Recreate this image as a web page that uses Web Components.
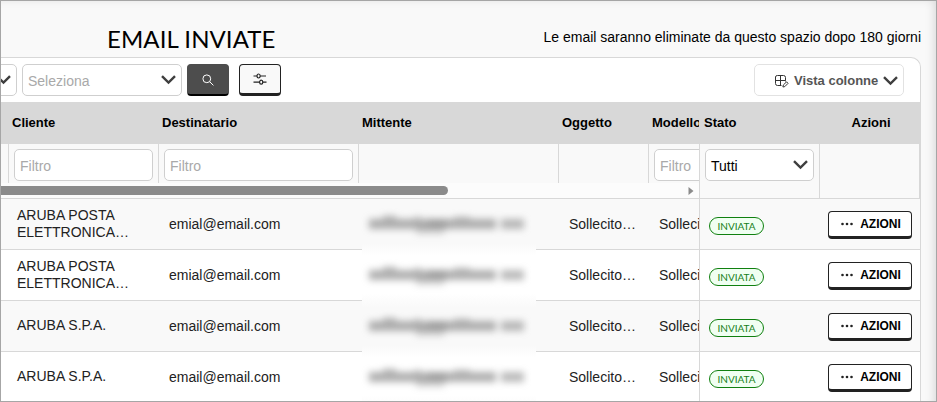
<!DOCTYPE html>
<html lang="it">
<head>
<meta charset="utf-8">
<title>Email inviate</title>
<style>
  html, body {
    margin: 0;
    height: 100%;
    overflow: hidden;
  }

  body {
    --line: #d8d8d8;
    --field-line: #cfcfcf;
    --stripe: #f9f9f9;
    --ink: #222;
    font-family: "Liberation Sans", Arial, sans-serif;
    font-size: 14px;
    color: #000;
  }
</style>
</head>
<body>
<mail-page></mail-page>

<script>
// Shared base: attaches an open root and fills it from template()
class MailElement extends HTMLElement {
  constructor() {
    super();
    this.attachShadow({ mode: 'open' });
  }

  connectedCallback() {
    this.shadowRoot.innerHTML = this.template();
  }
}

const CHEVRON = `
  <svg width="15" height="10" viewBox="0 0 15 10" fill="none" stroke="#3f3f3f" stroke-width="2.4">
    <path d="M1 1.2 7.5 7.6 14 1.2"/>
  </svg>`;

class MailSelect extends MailElement {
  template() {
    return `
      <style>
        :host {
          display: flex;
          align-items: center;
          box-sizing: border-box;
          height: 32px;
          padding: 2px 5px 0 5px;
          background: #fff;
          border: 1px solid var(--field-line);
          border-radius: 5px;
        }
        :host([placeholder]) { color: #a9a9a9; }
        svg { flex: none; margin: -2px 0 0 auto; }
      </style>
      <slot></slot>${CHEVRON}
    `;
  }
}

class MailFilter extends MailElement {
  template() {
    return `
      <style>
        :host {
          display: flex;
          align-items: center;
          box-sizing: border-box;
          height: 32px;
          padding: 2px 5px 0;
          color: #a9a9a9;
          background: #fff;
          border: 1px solid var(--field-line);
          border-radius: 5px;
        }
      </style>
      <slot></slot>
    `;
  }
}

class MailButton extends MailElement {
  template() {
    return `
      <style>
        :host {
          display: flex;
          align-items: center;
          justify-content: center;
          box-sizing: border-box;
          width: 42px;
          height: 32px;
          border: 1px solid var(--ink);
          border-bottom-width: 3px;
          border-radius: 4px;
          background: #f9f9f9;
        }
        :host([variant="dark"]) {
          background: #4d4d4d;
          border-color: #4d4d4d;
          border-bottom: 2px solid #000;
        }
        :host([variant="action"]) {
          width: 84px;
          height: 28px;
          gap: 7px;
          padding-left: 2px;
          background: #fff;
          font-size: 12px;
          font-weight: bold;
          color: #000;
        }
      </style>
      <slot></slot>
    `;
  }
}

class MailBadge extends MailElement {
  template() {
    return `
      <style>
        :host {
          display: flex;
          align-items: center;
          justify-content: center;
          box-sizing: border-box;
          width: 55px;
          height: 18px;
          border: 1px solid #108010;
          border-radius: 9px;
          background: #f0fff2;
          color: #16801a;
          font: 10px Lato, sans-serif;
        }
      </style>
      <slot></slot>
    `;
  }
}

class MailToolbar extends MailElement {
  template() {
    return `
      <style>
        :host {
          display: flex;
          align-items: center;
          box-sizing: border-box;
          height: 44px;
          padding: 0 16px 0 0;
          overflow: hidden;
        }
        .prev { flex: none; width: 160px; margin-left: -144px; }
        .pick { width: 160px; margin-left: 5px; }
        .search { margin-left: 5px; }
        .tune { margin-left: 10px; }
        .view {
          display: flex;
          align-items: center;
          box-sizing: border-box;
          width: 150px;
          height: 32px;
          margin-left: auto;
          padding: 0 5px 0 20px;
          border: 1px solid #e2e2e2;
          border-radius: 5px;
          color: #555;
          font-size: 13px;
          font-weight: bold;
        }
        .view span { margin-left: 5px; flex: 1; white-space: nowrap; }
        .view svg { position: relative; top: .5px; }
      </style>
      <mail-select class="prev"></mail-select>
      <mail-select class="pick" placeholder>Seleziona</mail-select>
      <mail-button class="search" variant="dark">
        <svg width="12" height="12" viewBox="0 0 12 12" fill="none" stroke="#fff" stroke-width="1">
          <circle cx="4.8" cy="4.8" r="3.9"/>
          <path d="M7.7 7.7 11.4 11.4"/>
        </svg>
      </mail-button>
      <mail-button class="tune">
        <svg width="14" height="12" viewBox="0 0 14 12" fill="none" stroke="#222" stroke-width="1.2">
          <path d="M.5 3H4M7.2 3H13M.5 9.2H6.6M9.8 9.2H13.5"/>
          <ellipse cx="5.6" cy="3" rx="1.6" ry="2"/>
          <ellipse cx="8.2" cy="9.2" rx="1.6" ry="2"/>
        </svg>
      </mail-button>
      <div class="view">
        <svg width="14" height="14" viewBox="0 0 14 14" fill="none" stroke="#333" stroke-width="1">
          <path d="M6.5 11.5H2.5Q.5 11.5.5 9.5V3Q.5 1.5 2.5 1.5H8.5Q10.5 1.5 10.5 3.5V6.5H.5M5.5 1.5V11.5M10.5 6.5V7.5"/>
          <path d="M8.3 11 11.3 8.1Q12.4 7.8 13 9.4L9.8 12.6 7.9 13Z"/>
        </svg>
        <span>Vista colonne</span>
        ${CHEVRON}
      </div>
    `;
  }
}

// One grid line: a clipped scrolling half and a pinned half on the right
class MailRow extends MailElement {
  template() {
    return `
      <style>
        :host {
          display: flex;
          box-sizing: border-box;
          height: 51px;
          background: var(--row, #fff);
          border-bottom: 1px solid var(--line);
          color: var(--ink);
        }
        .scroll { display: flex; flex: 1; min-width: 0; overflow-x: clip; }
        .pinned {
          display: flex;
          flex: none;
          width: 221px;
          box-sizing: border-box;
          border-left: 1px solid var(--line);
        }
        .cell {
          display: flex;
          flex: none;
          align-items: center;
          box-sizing: border-box;
          width: 200px;
          padding-left: 10px;
          white-space: nowrap;
        }
        .edge { width: 8px; padding: 0; }
        .client { width: 150px; padding-left: 8px; line-height: 17px; white-space: pre; }
        .client.single { padding-bottom: 2px; }
        .subject { width: 90px; }
        .model { width: 150px; }
        .state { width: 120px; padding: 4px 0 0 9px; }
        .actions { width: 100px; padding: 1px 0 0 8px; }
        .sender { position: relative; padding-left: 3px; }
        /* blurred cell: softens the line below it as well */
        .sender::after {
          content: "";
          position: absolute;
          left: 3px;
          bottom: -7px;
          width: 174px;
          height: 13px;
          background: linear-gradient(var(--row, #fff), var(--next, #fff));
        }
      </style>
      <div class="scroll">
        <div class="cell edge"></div>
        <div class="cell client ${this.hasAttribute('single') ? 'single' : ''}"><slot name="client"></slot></div>
        <div class="cell"><slot name="recipient"></slot></div>
        <div class="cell sender">
          <svg width="174" height="36" viewBox="0 0 174 36" style="filter: blur(3.6px)" fill="#777">
            <path opacity=".58" d="M7 13H21V10H34V13H53V11H58V13H92V11H108V13H134V23H7Z"/>
            <path opacity=".3" d="M54 20H82V28H54ZM66 13H84V24H66Z"/>
            <path opacity=".5" d="M139 13H162V23H139Z"/>
          </svg>
        </div>
        <div class="cell subject">Sollecito…</div>
        <div class="cell model">Sollecito</div>
      </div>
      <div class="pinned">
        <div class="cell state"><mail-badge>INVIATA</mail-badge></div>
        <div class="cell actions">
          <mail-button variant="action">
            <svg width="12" height="4" viewBox="0 0 12 4" fill="#222">
              <circle cx="1.5" cy="2" r="1.3"/><circle cx="6" cy="2" r="1.3"/><circle cx="10.5" cy="2" r="1.3"/>
            </svg>
            <span>AZIONI</span>
          </mail-button>
        </div>
      </div>
    `;
  }
}

class MailGrid extends MailElement {
  template() {
    return `
      <style>
        :host { display: block; }
        .line { display: flex; }
        .scroll { flex: 1; min-width: 0; overflow: hidden; }
        .cells { display: flex; }
        .cell { flex: none; box-sizing: border-box; width: 200px; }
        .w150 { width: 150px; }
        .w90 { width: 90px; }
        .w120 { width: 120px; }
        .w100 { width: 100px; }
        .pinned { display: flex; flex: none; box-sizing: border-box; width: 221px; border-left: 1px solid var(--line); }

        .head {
          height: 42px;
          background: var(--line);
          font-size: 13px;
          font-weight: bold;
          line-height: 41px;
        }
        .head .cell { padding-left: 3px; }
        .head .pinned .cell { padding-left: 4px; }
        .head .pinned .w100 { padding: 0 0 0 2px; text-align: center; }

        .filters { height: 55px; box-sizing: border-box; border-bottom: 1px solid var(--line); background: var(--stripe); }
        .filters .cells { height: 39px; }
        .filters .cell { padding: 5px 5px 0; border-right: 1px solid var(--line); }
        .line .cell.edge { width: 8px; padding: 0; }
        .track {
          display: flex;
          align-items: center;
          justify-content: space-between;
          height: 15px;
          padding-right: 5px;
          background: #fcfcfc;
        }
        .thumb { width: 447px; height: 9px; background: #8b8b8b; border-radius: 0 5px 5px 0; }
      </style>
      <div class="line head">
        <div class="scroll">
          <div class="cells">
            <div class="cell edge"></div>
            <div class="cell w150">Cliente</div>
            <div class="cell">Destinatario</div>
            <div class="cell">Mittente</div>
            <div class="cell w90">Oggetto</div>
            <div class="cell w150">Modello</div>
          </div>
        </div>
        <div class="pinned">
          <div class="cell w120">Stato</div>
          <div class="cell w100">Azioni</div>
        </div>
      </div>
      <div class="line filters">
        <div class="scroll">
          <div class="cells">
            <div class="cell edge"></div>
            <div class="cell w150"><mail-filter>Filtro</mail-filter></div>
            <div class="cell"><mail-filter>Filtro</mail-filter></div>
            <div class="cell"></div>
            <div class="cell w90"></div>
            <div class="cell w150"><mail-filter>Filtro</mail-filter></div>
          </div>
          <div class="track">
            <div class="thumb"></div>
            <svg width="6" height="8" viewBox="0 0 6 8"><path d="M.5 0 5.5 4 .5 8Z" fill="#8b8b8b"/></svg>
          </div>
        </div>
        <div class="pinned">
          <div class="cell w120"><mail-select>Tutti</mail-select></div>
          <div class="cell w100"></div>
        </div>
      </div>
      <slot></slot>
    `;
  }
}

class MailPage extends MailElement {
  rows() {
    const mails = [
      { client: 'ARUBA POSTA\nELETTRONICA…', to: 'emial@email.com' },
      { client: 'ARUBA POSTA\nELETTRONICA…', to: 'emial@email.com' },
      { client: 'ARUBA S.P.A.', to: 'email@email.com' },
      { client: 'ARUBA S.P.A.', to: 'email@email.com' }
    ];
    return mails.map((mail, i) => `
      <mail-row ${mail.client.includes('\n') ? '' : 'single'} style="${i % 2 ? '--next: #f9f9f9' : '--row: #f9f9f9'}">
        <span slot="client">${mail.client}</span>
        <span slot="recipient">${mail.to}</span>
      </mail-row>
    `).join('');
  }

  template() {
    return `
      <style>
        :host {
          display: block;
          box-sizing: border-box;
          width: 937px;
          height: 402px;
          overflow: hidden;
          border: 1px solid #a6a6a6;
          background: #f9f9f9;
          box-shadow: inset -7px 3px 10px -5px rgba(0, 0, 0, .13);
        }
        header {
          display: flex;
          align-items: center;
          justify-content: space-between;
          box-sizing: border-box;
          height: 56px;
          padding: 16px 15px 0 106px;
        }
        h1 { margin: 2px 0 0; font: 400 24px Lato, sans-serif; letter-spacing: .08px; }
        p { margin: 0; }
        .panel {
          box-sizing: border-box;
          width: 920px;
          height: 360px;
          overflow: hidden;
          background: #fff;
          border: solid var(--line);
          border-width: 1px 1px 0 0;
          border-radius: 0 10px 0 0;
        }
      </style>
      <header>
        <h1>EMAIL INVIATE</h1>
        <p>Le email saranno eliminate da questo spazio dopo 180 giorni</p>
      </header>
      <section class="panel">
        <mail-toolbar></mail-toolbar>
        <mail-grid>${this.rows()}</mail-grid>
      </section>
    `;
  }
}

customElements.define('mail-select', MailSelect);
customElements.define('mail-filter', MailFilter);
customElements.define('mail-button', MailButton);
customElements.define('mail-badge', MailBadge);
customElements.define('mail-toolbar', MailToolbar);
customElements.define('mail-row', MailRow);
customElements.define('mail-grid', MailGrid);
customElements.define('mail-page', MailPage);
</script>
</body>
</html>
